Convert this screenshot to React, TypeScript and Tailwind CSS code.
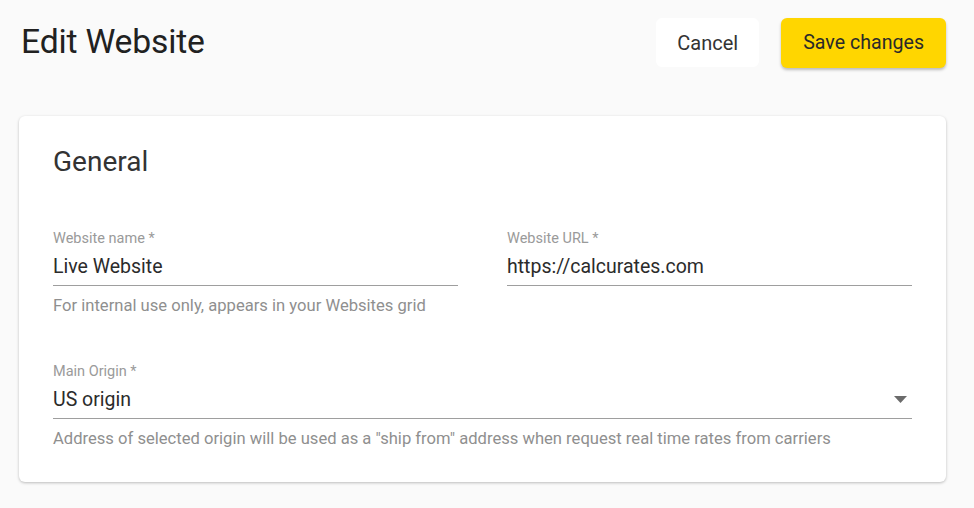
import { ReactNode } from 'react';

function Field({
  label,
  value,
  helper,
  select,
}: {
  label: string;
  value: string;
  helper?: string;
  select?: boolean;
}) {
  return (
    <div className="flex flex-col">
      <label className="text-[14.5px] leading-[16px] text-[#9a9a9a]">{label}</label>
      <div className="flex items-center justify-between h-[35px] pb-[3px] mt-[4px] border-b border-[#9e9e9e]">
        <span className="text-[19.5px] text-[#2b2b2b]">{value}</span>
        {select && (
          <svg width="13" height="7" viewBox="0 0 13 7" className="mr-[5px]">
            <path d="M0 0h13L6.5 7z" fill="#6b6b6b" />
          </svg>
        )}
      </div>
      <div className="h-[20px] mt-[10px] text-[16.6px] leading-[20px] text-[#8f8f8f] whitespace-nowrap">
        {helper}
      </div>
    </div>
  );
}

function Card({ children }: { children: ReactNode }) {
  return (
    <div className="bg-white rounded-md shadow-[0_1px_3px_rgba(0,0,0,0.25)] px-[34px] pt-[28px] pb-[33px]">
      {children}
    </div>
  );
}

export default function App() {
  return (
    <div
      className="min-h-[508px] bg-[#fafafa] pl-[19px] pr-[28px]"
      style={{ fontFamily: 'Roboto, "Noto Sans", sans-serif' }}>
      <header className="flex items-center justify-between h-[86px] pb-[1px]">
        <h1 className="pl-[2px] text-[33.7px] text-[#212121] tracking-[-0.2px]">Edit Website</h1>
        <div className="flex items-center gap-[22px]">
          <button
            type="button"
            className="h-[49px] px-[21px] rounded-md bg-white text-[20px] text-[#333]">
            Cancel
          </button>
          <button
            type="button"
            className="h-[50px] px-[22px] rounded-md bg-[#ffd600] text-[19.6px] text-[#2a2a2a] shadow-[0_2px_3px_rgba(0,0,0,0.25)]">
            Save changes
          </button>
        </div>
      </header>

      <div className="mt-[30px]">
        <Card>
          <h2 className="text-[28px] leading-[36px] text-[#333]">General</h2>
          <div className="grid grid-cols-2 gap-x-[49px] mt-[51px]">
            <Field
              label="Website name *"
              value="Live Website"
              helper="For internal use only, appears in your Websites grid"
            />
            <Field label="Website URL *" value="https://calcurates.com" />
          </div>
          <div className="mt-[48px]">
            <Field
              label="Main Origin *"
              value="US origin"
              select
              helper='Address of selected origin will be used as a "ship from" address when request real time rates from carriers'
            />
          </div>
        </Card>
      </div>
    </div>
  );
}
